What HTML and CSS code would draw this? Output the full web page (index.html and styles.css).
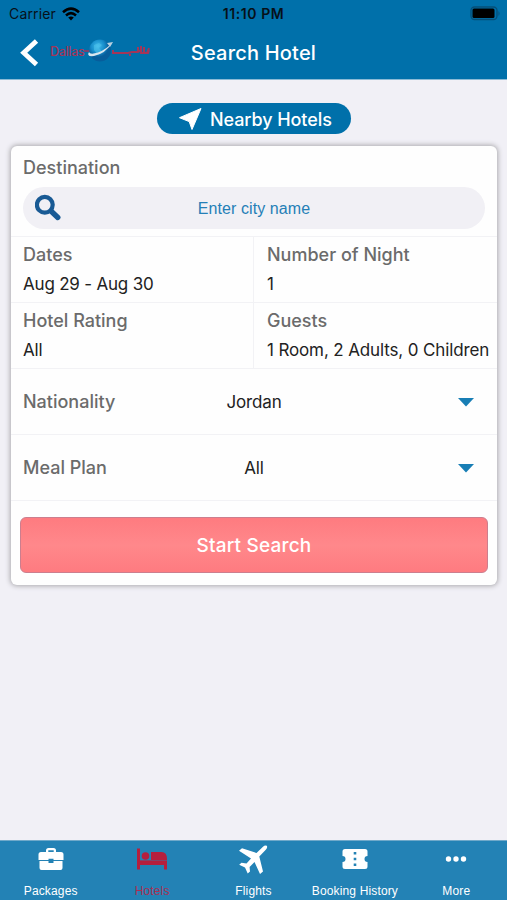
FILE: index.html
```html
<!DOCTYPE html>
<html lang="en">
<head>
<meta charset="utf-8">
<title>Search Hotel</title>
<link rel="stylesheet" href="styles.css">
</head>
<body>
<header>
  <div class="status">
    <div class="carrier"><span>Carrier</span>
      <svg width="18" height="14" viewBox="0 0 18 14" fill="none" stroke="#000" stroke-width="2.6"><path d="M1 5.2Q9-1.8 17 5.2M4 8.4Q9 4 14 8.4"/><path d="M6.2 10.6Q9 8.2 11.8 10.6L9 13.6Z" fill="#000" stroke="none"/></svg>
    </div>
    <span class="clock">11:10 PM</span>
    <svg class="battery" width="31" height="15" viewBox="0 0 31 15"><rect x="1" y="1" width="26" height="12.5" rx="3.5" fill="none" stroke="#064f78" stroke-width="1.3"/><rect x="2.5" y="2.5" width="22" height="9.5" rx="1.5"/><path d="M28.5 5v5q2-2.500 0-5" fill="#064f78"/></svg>
  </div>
  <div class="nav">
    <div class="brand">
      <svg class="back" width="20" height="28" viewBox="0 0 20 28" fill="none" stroke="#fff" stroke-width="4.8"><path d="M17.500 2L4.700 13.800L17.500 25.500"/></svg>
      <div class="logo">
        <span class="latin">Dallas</span>
        <svg width="32" height="24" viewBox="0 0 32 24"><defs><radialGradient id="globe" cx=".4" cy=".3"><stop offset="0" stop-color="#42bcec"/><stop offset=".6" stop-color="#168dcb"/><stop offset="1" stop-color="#075d9b"/></radialGradient></defs><path d="M0 12h6" stroke="#9c365d" stroke-width="1.500"/><circle cx="16" cy="11.500" r="11" fill="url(#globe)"/><path d="M10 6l5-2 3 2-3 3 3 3-4 4-4-5z" fill="#51c5ed" opacity=".5"/><path d="M5 13Q2 18 10 17Q21 15 29 3Q23 10 14 13.500Q6 16 5 13" fill="#d7e5ee"/><path d="M23 4l6-1-3 5z" fill="#b9d0df"/></svg>
        <svg width="39" height="14" viewBox="0 0 39 14" fill="none" stroke="#a33658" stroke-width="2"><path d="M1 6v3h15l4-1h6l3-2v3h7l1-3M26 8V3M29 8V2M32 9V3M35 9l2-5M17 11h2"/></svg>
      </div>
    </div>
    <h1>Search Hotel</h1>
  </div>
</header>
<main>
  <button class="nearby"><svg width="23" height="23" viewBox="0 0 23 23"><path fill="#fff" stroke="#fff" stroke-linejoin="round" d="M22 .500L13 21.500L10.200 13.600L.500 9.700Z"/></svg><span>Nearby Hotels</span></button>
  <section class="card">
    <div class="destination">
      <div class="label">Destination</div>
      <div class="search">
        <svg width="28" height="28" viewBox="0 0 28 28" fill="none" stroke="#195a94"><circle cx="9.800" cy="10.800" r="7.900" stroke-width="4.200"/><path d="M16.500 17.500l6.300 6" stroke-width="5.400" stroke-linecap="round"/></svg>
        <span>Enter city name</span>
      </div>
    </div>
    <div class="pair">
      <div class="cell"><div class="label">Dates</div><div class="value dates">Aug 29 - Aug 30</div></div>
      <div class="cell"><div class="label">Number of Night</div><div class="value">1</div></div>
    </div>
    <div class="pair">
      <div class="cell"><div class="label">Hotel Rating</div><div class="value">All</div></div>
      <div class="cell"><div class="label">Guests</div><div class="value guests">1 Room, 2 Adults, 0 Children</div></div>
    </div>
    <div class="choice"><span class="label">Nationality</span><span class="value">Jordan</span><svg width="16" height="9" viewBox="0 0 16 9"><path fill="#187eb5" d="M0 0h16L8 8.500z"/></svg></div>
    <div class="choice"><span class="label">Meal Plan</span><span class="value">All</span><svg width="16" height="9" viewBox="0 0 16 9"><path fill="#187eb5" d="M0 0h16L8 8.500z"/></svg></div>
    <div class="action"><button class="start">Start Search</button></div>
  </section>
</main>
<nav class="tabs">
  <div class="tab"><svg width="30" height="30" viewBox="0 0 30 30"><path fill="#fff" fill-rule="evenodd" d="M10 7V5.500Q10 3 12.500 3h5Q20 3 20 5.500V7h5q2.500 0 2.500 2.500V15h-10v-1.200h-5V15h-10V9.500Q2.500 7 5 7zM12.300 7h5.400V5.200h-5.400zM3.500 16h9v2h5v-2h9v7q0 2-2 2h-19q-2 0-2-2z"/></svg><span>Packages</span></div>
  <div class="tab active"><svg width="30" height="30" viewBox="0 0 30 30"><path fill="#b51f3e" d="M0 3.500h3V15h11V7h10.500q5.500 0 5.500 7v10.500h-3V20H3v4.500H0z"/><circle cx="8.500" cy="11" r="3.800" fill="#b51f3e"/><path d="M3 15.500h27" stroke="#82446b" stroke-width="1"/></svg><span>Hotels</span></div>
  <div class="tab"><svg width="30" height="30" viewBox="0 0 30 30"><path fill="#fff" d="M28.800.800Q27-.300 25 1.700L18.500 8 4 3.300 1 5.800 13 13.400 8.500 18.500 3.500 17.800 1.200 19.800 7 22.600 9.700 28.500 12 26.500 11.600 22 16.500 17 22 29 25 26.500 21.300 11.500 28 4.500Q29.800 2.300 28.800.800"/></svg><span>Flights</span></div>
  <div class="tab"><svg width="30" height="30" viewBox="0 0 30 30"><path fill="#fff" fill-rule="evenodd" d="M5 4h20q2.500 0 2.500 2.500V11a3 3 0 0 0 0 6v4.500q0 2.500-2.500 2.500H5q-2.500 0-2.500-2.500V17a3 3 0 0 0 0-6V6.500Q2.500 4 5 4M13.700 7v2.600h2.600V7zm0 5.700v2.600h2.600v-2.600zm0 5.700V21h2.600v-2.600z"/></svg><span>Booking History</span></div>
  <div class="tab"><svg width="30" height="30" viewBox="0 0 30 30" fill="#fff"><circle cx="7.500" cy="14" r="2.700"/><circle cx="15" cy="14" r="2.700"/><circle cx="22.500" cy="14" r="2.700"/></svg><span>More</span></div>
</nav>
</body>
</html>
```
FILE: styles.css
```css
* { box-sizing: border-box; }
body {
  margin: 0;
  width: 507px;
  height: 900px;
  display: flex;
  flex-direction: column;
  overflow: hidden;
  background: #f1f0f6;
  color: #222;
  font-family: Inter, "Liberation Sans", sans-serif;
}
svg { display: block; flex: none; }
button { border: 0; padding: 0; font: inherit; color: #fff; }
header { height: 80px; background: #0070aa; border-bottom: 1px solid #8bbbd6; }
.status, .nav { display: grid; grid-template-columns: 1fr auto 1fr; align-items: center; }
.status { height: 27px; color: #071019; font-size: 14px; }
.carrier { display: flex; align-items: center; gap: 6px; padding-left: 9px; letter-spacing: .15px; }
.clock { font-weight: 600; font-size: 14px; letter-spacing: .6px; }
.battery { justify-self: end; margin-right: 6px; }
.nav { height: 52px; }
.brand { display: flex; align-items: center; padding-left: 19px; }
.logo { display: flex; align-items: center; height: 24px; margin: -4px 0 0 11px; }
.latin { width: 34px; color: #a33658; font-size: 12.5px; font-weight: 500; letter-spacing: -.3px; }
.logo svg + svg { margin-left: -4px; }
h1 { margin: -1px 0 0; color: #fff; font-size: 20px; line-height: 28px; font-weight: 500; letter-spacing: .2px; }
main { flex: 1; padding: 23px 10px 0; }
.nearby {
  width: 194px;
  height: 31px;
  margin: 0 auto 12px 147px;
  border-radius: 16px;
  display: flex;
  align-items: center;
  gap: 8px;
  padding: 1px 0 0 22px;
  background: #0070aa;
  font-size: 18px;
  font-weight: 500;
  letter-spacing: -.08px;
  white-space: nowrap;
}
.card {
  width: 486px;
  height: 439px;
  margin-left: 1px;
  border-radius: 6px;
  background: #fefefe;
  box-shadow: 0 0 5px 1px #aaa9ad;
}
.label { color: #6b6b6b; font-size: 18px; line-height: 24px; font-weight: 500; letter-spacing: 0; }
.value { color: #222; font-size: 17px; line-height: 24px; letter-spacing: -.13px; }
.value.dates { letter-spacing: -.2px; }
.destination { height: 90px; padding: 10px 12px 0; }
.search {
  height: 42px;
  margin-top: 7px;
  padding: 0 0 0 12px;
  border-radius: 21px;
  display: grid;
  grid-template-columns: 28px 1fr 40px;
  align-items: center;
  background: #f1f0f5;
  color: #257fb7;
  font: 16px "Liberation Sans", sans-serif;
  text-align: center;
}
.search span { padding-top: 1px; letter-spacing: .08px; }
.pair { height: 66px; display: grid; grid-template-columns: 242px 1fr; border-top: 1px solid #f2f2f5; }
.cell { padding: 6px 0 0 12px; white-space: nowrap; }
.cell + .cell { padding-left: 13px; border-left: 1px solid #f2f2f5; }
.cell .value { margin-top: 5px; }
.choice {
  height: 66px;
  display: grid;
  grid-template-columns: 110px 1fr 110px;
  align-items: center;
  padding: 1px 12px 0;
  border-top: 1px solid #f2f2f5;
}
.choice .label { white-space: nowrap; }
.choice .value { text-align: center; }
.choice svg { justify-self: end; margin-right: 11px; }
.action { padding: 16px 9px 0; border-top: 1px solid #f2f2f5; }
.start {
  display: block;
  width: 468px;
  height: 56px;
  border: 1px solid #cc7e8e;
  border-radius: 6px;
  background: linear-gradient(#fe7b80, #ff888b 50%, #fe7b80);
  font-size: 19px;
  font-weight: 500;
  letter-spacing: .2px;
}
.tabs { height: 60px; display: grid; grid-template-columns: repeat(5, 1fr); background: #2382b5; border-top: 1px solid #70a9ca; }
.tab { display: flex; flex-direction: column; align-items: center; padding-top: 4px; color: #fff; font: 12px/16px "Liberation Sans", sans-serif; letter-spacing: .15px; white-space: nowrap; }
.tab span { margin-top: 8px; }
.tab.active { color: #a92f53; }
```
